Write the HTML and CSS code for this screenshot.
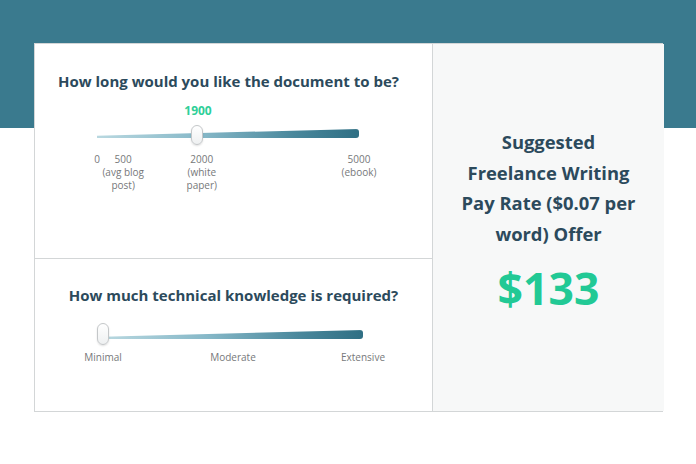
FILE: index.html
```html
<!DOCTYPE html>
<html lang="en">
<head>
  <meta charset="UTF-8" />
  <title>Freelance Writing Pay Rate Calculator</title>
  <link rel="stylesheet" href="styles.css">
</head>
<body>

<div class="calc">
  <div class="calc-inputs">
    <section class="question question-length">
      <h2>How long would you like the document to be?</h2>
      <div class="current-value">1900</div>
      <div class="slider slider-length">
        <div class="track"></div>
        <span class="thumb" style="left: 38%;"></span>
      </div>
      <div class="ticks ticks-length">
        <span class="tick" style="left: 0%;">0</span>
        <span class="tick" style="left: 10%;">500<br>(avg blog<br>post)</span>
        <span class="tick" style="left: 40%;">2000<br>(white<br>paper)</span>
        <span class="tick" style="left: 100%;">5000<br>(ebook)</span>
      </div>
    </section>

    <section class="question question-knowledge">
      <h2>How much technical knowledge is required?</h2>
      <div class="slider slider-knowledge">
        <div class="track"></div>
        <span class="thumb" style="left: 0%;"></span>
      </div>
      <div class="ticks ticks-knowledge">
        <span class="tick" style="left: 0%;">Minimal</span>
        <span class="tick" style="left: 50%;">Moderate</span>
        <span class="tick" style="left: 100%;">Extensive</span>
      </div>
    </section>
  </div>

  <aside class="calc-result">
    <h3>Suggested Freelance Writing Pay Rate ($0.07 per word) Offer</h3>
    <div class="price">$133</div>
  </aside>
</div>

</body>
</html>
```

FILE: styles.css
```css
* {
  margin: 0;
  padding: 0;
  box-sizing: border-box;
}
body {
  font-family: 'Open Sans', 'Noto Sans', sans-serif;
  background: linear-gradient(#3a7a8e 0, #3a7a8e 128px, #fff 128px);
  color: #2c4a5c;
  min-height: 464px;
}

.calc {
  display: grid;
  grid-template-columns: 398px 231px;
  width: 629px;
  height: 369px;
  margin: 43px 0 0 34px;
  background: #fff;
  border: 1px solid #d3d6d7;
}

.calc-inputs {
  border-right: 1px solid #d3d6d7;
}

.question h2 {
  font-size: 15px;
  line-height: 20px;
  font-weight: 700;
  text-align: center;
  color: #2c4a5c;
}

.question-length {
  height: 215px;
  padding-top: 27px;
  border-bottom: 1px solid #d3d6d7;
}
.question-length h2 {
  padding-right: 10px;
}
.question-knowledge {
  padding-top: 26px;
}

.current-value {
  margin: 12px 0 0 128px;
  width: 70px;
  text-align: center;
  font-size: 12px;
  line-height: 16px;
  font-weight: 700;
  color: #2fcf98;
}

.slider {
  position: relative;
  height: 20px;
  padding-top: 4px;
}
.slider-length {
  width: 262px;
  margin: 6px 0 0 62px;
}
.slider-knowledge {
  width: 260px;
  height: 22px;
  margin: 18px 0 0 68px;
  padding-top: 7px;
}

.track {
  height: 9px;
  border-radius: 0 3px 3px 0;
  background: linear-gradient(to right, #b9d8e0, #86b8c8 40%, #4a889c 75%, #2f6f84);
  clip-path: polygon(0 74%, 100% 0, 100% 100%, 0 100%);
}

.thumb {
  position: absolute;
  top: 0;
  width: 12px;
  height: 100%;
  margin-left: -6px;
  border: 1px solid #c4c7c9;
  border-radius: 6px;
  background: linear-gradient(#fff, #eef0f1);
  box-shadow: 0 1px 2px rgba(0,0,0,0.12);
}

.ticks {
  position: relative;
  font-size: 10px;
  line-height: 13px;
  color: #76787a;
}
.ticks-length {
  width: 262px;
  height: 42px;
  margin: 8px 0 0 62px;
}
.ticks-knowledge {
  width: 260px;
  height: 14px;
  margin: 6px 0 0 68px;
}
.tick {
  position: absolute;
  top: 0;
  transform: translateX(-50%);
  text-align: center;
  white-space: nowrap;
}

.calc-result {
  background: #f7f8f8;
  padding: 83px 22px 0;
  text-align: center;
}
.calc-result h3 {
  font-size: 18.4px;
  line-height: 30.5px;
  font-weight: 700;
  color: #2c4a5c;
}
.price {
  margin-top: 15px;
  font-size: 44.5px;
  line-height: 48px;
  font-weight: 700;
  color: #22c995;
}
```
